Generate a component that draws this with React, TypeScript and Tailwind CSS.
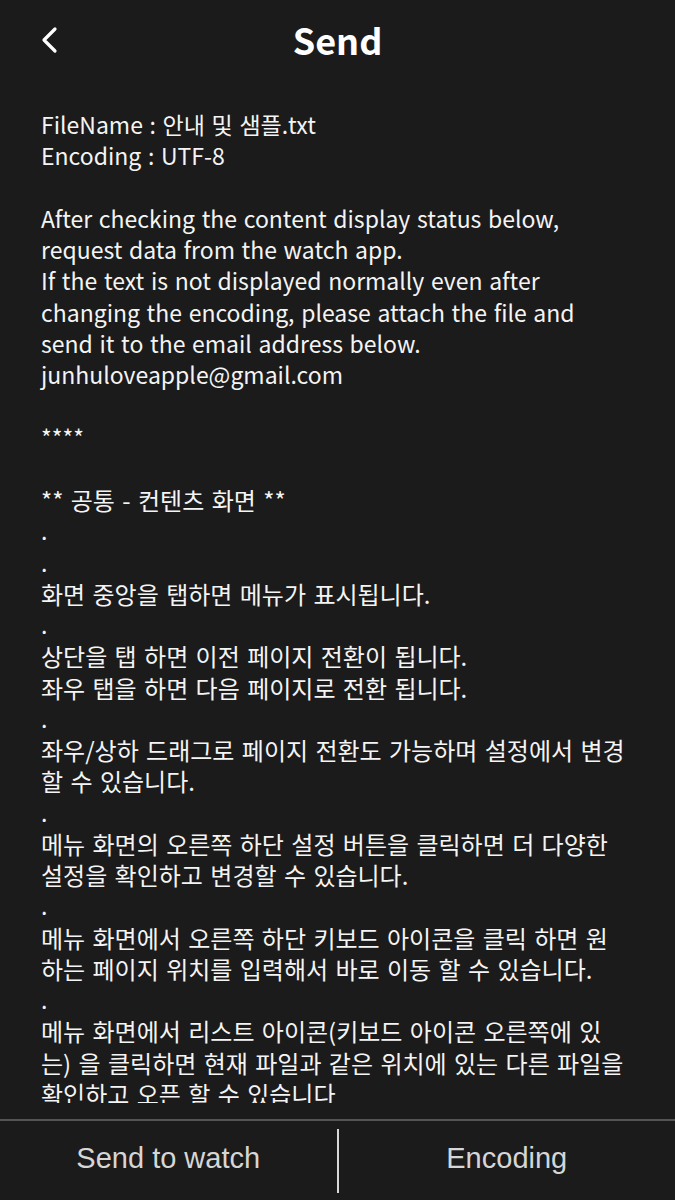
import React from "react";

type Line = { t: string; k?: boolean };

const lines: Line[] = [
  { t: "FileName : 안내 및 샘플.txt" },
  { t: "Encoding : UTF-8" },
  { t: "" },
  { t: "After checking the content display status below," },
  { t: "request data from the watch app." },
  { t: "If the text is not displayed normally even after" },
  { t: "changing the encoding, please attach the file and" },
  { t: "send it to the email address below." },
  { t: "junhuloveapple@gmail.com" },
  { t: "" },
  { t: "****" },
  { t: "" },
  { t: "** 공통 - 컨텐츠 화면 **", k: true },
  { t: "." },
  { t: "." },
  { t: "화면 중앙을 탭하면 메뉴가 표시됩니다.", k: true },
  { t: "." },
  { t: "상단을 탭 하면 이전 페이지 전환이 됩니다.", k: true },
  { t: "좌우 탭을 하면 다음 페이지로 전환 됩니다.", k: true },
  { t: "." },
  { t: "좌우/상하 드래그로 페이지 전환도 가능하며 설정에서 변경", k: true },
  { t: "할 수 있습니다.", k: true },
  { t: "." },
  { t: "메뉴 화면의 오른쪽 하단 설정 버튼을 클릭하면 더 다양한", k: true },
  { t: "설정을 확인하고 변경할 수 있습니다.", k: true },
  { t: "." },
  { t: "메뉴 화면에서 오른쪽 하단 키보드 아이콘을 클릭 하면 원", k: true },
  { t: "하는 페이지 위치를 입력해서 바로 이동 할 수 있습니다.", k: true },
  { t: "." },
  { t: "메뉴 화면에서 리스트 아이콘(키보드 아이콘 오른쪽에 있", k: true },
  { t: "는) 을 클릭하면 현재 파일과 같은 위치에 있는 다른 파일을", k: true },
  { t: "확인하고 오픈 할 수 있습니다", k: true },
  { t: "" },
  { t: "" },
];

export default function App() {
  return (
    <div className="flex h-[1200px] w-[675px] flex-col overflow-hidden bg-[#1b1b1b] text-[#f4f4f4]">
      <header className="relative flex h-[78px] shrink-0 items-center justify-center">
        <button className="absolute left-[39px] top-[26px] flex h-[28px] w-[20px] items-center justify-center">
          <svg width="18" height="28" viewBox="0 0 18 28" fill="none">
            <path d="M15 3 L4 14 L15 25" stroke="#ffffff" strokeWidth="3.2" strokeLinecap="round" strokeLinejoin="round" />
          </svg>
        </button>
        <h1 className="text-[36px] font-bold leading-none text-white [font-family:'Noto_Sans_CJK_KR','Noto_Sans',sans-serif]">
          Send
        </h1>
      </header>
      <main className="flex-1 overflow-hidden pt-[31px] pl-[41px] pr-[10px] leading-[31.25px] [font-family:'Noto_Sans_CJK_KR','Noto_Sans',sans-serif]">
        {lines.map((l, i) =>
          l.k ? (
            <div key={i} className="h-[31.25px] whitespace-nowrap text-[24px] [word-spacing:2px]">
              {l.t}
            </div>
          ) : (
            <div key={i} className="h-[31.25px] whitespace-nowrap text-[23px] [word-spacing:1.5px]">
              {l.t === "" ? "\u00a0" : l.t}
            </div>
          )
        )}
      </main>
      <div className="h-[16px] shrink-0 bg-[#1b1b1b]" />
      <footer className="flex h-[81px] shrink-0 items-center border-t-2 border-[#555555] bg-[#1b1b1b] [font-family:'Liberation_Sans',Arial,sans-serif]">
        <button className="flex h-full flex-1 items-center justify-center pb-[4px] text-[29px] text-[#d6d6d6]">
          Send to watch
        </button>
        <div className="h-[64px] w-[2px] bg-[#d8d8d8]" />
        <button className="flex h-full flex-1 items-center justify-center pb-[4px] text-[29px] text-[#d6d6d6]">
          Encoding
        </button>
      </footer>
    </div>
  );
}
